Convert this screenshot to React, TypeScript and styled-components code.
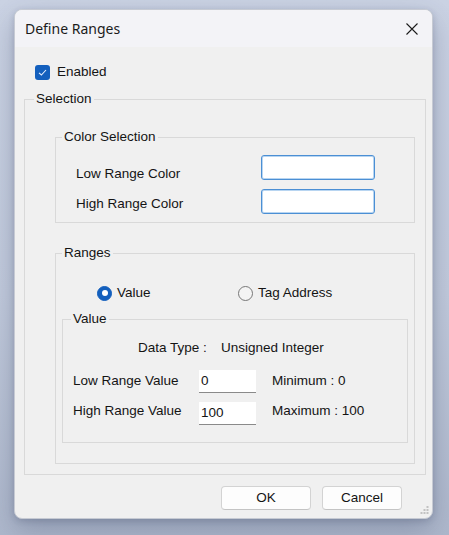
import React from "react";
import styled, { createGlobalStyle } from "styled-components";

const Global = createGlobalStyle`
  html, body { margin: 0; padding: 0; height: 100%; }
  body {
    background: linear-gradient(180deg, #cbd3e4 0%, #c2cbdd 55%, #aeb8cc 100%);
    font-family: "Liberation Sans", Arial, sans-serif;
    overflow: hidden;
  }
  #root { height: 100%; }
`;

const Page = styled.div`
  height: 100%;
  box-sizing: border-box;
  padding: 9px 0 0 14px;
`;

const Window = styled.div`
  position: relative;
  width: 419px;
  height: 510px;
  box-sizing: border-box;
  background: #f0f0f0;
  border: 1px solid #c6cad3;
  border-radius: 8px;
  box-shadow: 0 10px 28px rgba(40, 52, 84, 0.28), 0 2px 6px rgba(40, 52, 84, 0.18);
  display: flex;
  flex-direction: column;
  overflow: hidden;
  color: #141414;
  font-size: 13.5px;
`;

const TitleBar = styled.div`
  height: 37px;
  flex: none;
  display: flex;
  align-items: center;
  justify-content: space-between;
  padding: 0 14px 0 10px;
  background: #f3f3f7;
`;

const Title = styled.div`
  font-family: "Noto Sans", "Liberation Sans", sans-serif;
  font-size: 14px;
  color: #1b1b1b;
  line-height: 18px;
`;

const CloseIcon = styled.svg`
  width: 12px;
  height: 12px;
  display: block;
`;

const Body = styled.div`
  flex: 1;
  display: flex;
  flex-direction: column;
  padding: 0 6px 0 9px;
`;

const CheckRow = styled.label`
  display: flex;
  align-items: center;
  gap: 7px;
  height: 16px;
  margin: 17px 0 0 11px;
  line-height: 16px;
`;

const CheckBox = styled.span`
  width: 15px;
  height: 15px;
  border-radius: 3px;
  background: #135fbd;
  display: flex;
  align-items: center;
  justify-content: center;
`;

const Group = styled.fieldset<{ $m: string; $pb: number }>`
  margin: ${(p) => p.$m};
  padding: 0 0 ${(p) => p.$pb}px 0;
  border: 1px solid #d9d9d9;
  min-width: 0;
  display: flex;
  flex-direction: column;
`;

const Legend = styled.legend<{ $x: number }>`
  margin-left: ${(p) => p.$x}px;
  padding: 0 2px;
  line-height: 16px;
  font-size: 13.5px;
`;

const ColorGrid = styled.div`
  display: flex;
  padding: 10px 0 0 20px;
`;

const LabelCol = styled.div<{ $w: number; $top: number; $gap: number }>`
  width: ${(p) => p.$w}px;
  padding-top: ${(p) => p.$top}px;
  display: flex;
  flex-direction: column;
  gap: ${(p) => p.$gap}px;
`;

const Label = styled.div`
  line-height: 16px;
  white-space: nowrap;
`;

const InputCol = styled.div`
  display: flex;
  flex-direction: column;
  gap: 9px;
`;

const ColorBox = styled.div`
  width: 114px;
  height: 25px;
  box-sizing: border-box;
  background: #ffffff;
  border: 1px solid #4b8fd4;
  border-radius: 3px;
  box-shadow: inset 0 0 0 1px #b8d5f1;
`;

const RadioRow = styled.div`
  display: flex;
  margin: 24px 0 0 41px;
  height: 16px;
`;

const RadioItem = styled.label<{ $w?: number }>`
  display: flex;
  align-items: center;
  gap: 5px;
  width: ${(p) => (p.$w ? `${p.$w}px` : "auto")};
  line-height: 16px;
`;

const RadioDot = styled.span<{ $on?: boolean }>`
  width: 15px;
  height: 15px;
  box-sizing: border-box;
  border-radius: 50%;
  display: flex;
  align-items: center;
  justify-content: center;
  background: ${(p) => (p.$on ? "#135fbd" : "#f4f4f4")};
  border: 1px solid ${(p) => (p.$on ? "#135fbd" : "#777777")};
  &::after {
    content: "";
    display: ${(p) => (p.$on ? "block" : "none")};
    width: 6px;
    height: 6px;
    border-radius: 50%;
    background: #ffffff;
  }
`;

const DataRow = styled.div`
  display: flex;
  padding: 13px 0 0 75px;
  line-height: 16px;
`;

const DataKey = styled.span`
  width: 83px;
`;

const ValueGrid = styled.div`
  display: flex;
  padding: 14px 0 0 10px;
`;

const NumInput = styled.div`
  width: 57px;
  height: 23px;
  box-sizing: border-box;
  background: #ffffff;
  border-bottom: 1px solid #8a8a8a;
  padding: 3px 0 0 2px;
  line-height: 16px;
`;

const InfoCol = styled.div`
  display: flex;
  flex-direction: column;
  gap: 14px;
  padding: 3px 0 0 16px;
`;

const ButtonRow = styled.div`
  display: flex;
  justify-content: flex-end;
  gap: 11px;
  margin-top: 11px;
  padding-right: 24px;
`;

const Button = styled.button<{ $w: number }>`
  width: ${(p) => p.$w}px;
  height: 24px;
  box-sizing: border-box;
  background: #fdfdfd;
  border: 1px solid #d3d3d3;
  border-bottom-color: #c4c4c4;
  border-radius: 4px;
  font-family: "Liberation Sans", Arial, sans-serif;
  font-size: 13.5px;
  color: #141414;
  padding: 0;
  line-height: 16px;
`;

const Grip = styled.svg`
  position: absolute;
  right: 3px;
  bottom: 3px;
  width: 10px;
  height: 10px;
`;

export default function App() {
  return (
    <>
      <Global />
      <Page>
        <Window>
          <TitleBar>
            <Title>Define Ranges</Title>
            <CloseIcon viewBox="0 0 12 12">
              <path d="M0.5 0.5 L11.5 11.5 M11.5 0.5 L0.5 11.5" stroke="#1b1b1b" strokeWidth="1.1" fill="none" />
            </CloseIcon>
          </TitleBar>
          <Body>
            <CheckRow>
              <CheckBox>
                <svg width="11" height="11" viewBox="0 0 11 11">
                  <path d="M2 5.8 L4.4 8 L9 3" stroke="#e6efff" strokeWidth="1.1" fill="none" />
                </svg>
              </CheckBox>
              Enabled
            </CheckRow>
            <Group $m="11px 0 0 0" $pb={10}>
              <Legend $x={9}>Selection</Legend>
              <Group $m="22px 10px 0 30px" $pb={8}>
                <Legend $x={6}>Color Selection</Legend>
                <ColorGrid>
                  <LabelCol $w={185} $top={10.5} $gap={14}>
                    <Label>Low Range Color</Label>
                    <Label>High Range Color</Label>
                  </LabelCol>
                  <InputCol>
                    <ColorBox />
                    <ColorBox />
                  </InputCol>
                </ColorGrid>
              </Group>
              <Group $m="22px 10px 0 30px" $pb={20}>
                <Legend $x={6}>Ranges</Legend>
                <RadioRow>
                  <RadioItem $w={141}>
                    <RadioDot $on />
                    Value
                  </RadioItem>
                  <RadioItem>
                    <RadioDot />
                    Tag Address
                  </RadioItem>
                </RadioRow>
                <Group $m="10px 6px 0 6px" $pb={17}>
                  <Legend $x={8}>Value</Legend>
                  <DataRow>
                    <DataKey>Data Type :</DataKey>
                    <span>Unsigned Integer</span>
                  </DataRow>
                  <ValueGrid>
                    <LabelCol $w={126} $top={3} $gap={14}>
                      <Label>Low Range Value</Label>
                      <Label>High Range Value</Label>
                    </LabelCol>
                    <InputCol>
                      <NumInput>0</NumInput>
                      <NumInput>100</NumInput>
                    </InputCol>
                    <InfoCol>
                      <Label>Minimum : 0</Label>
                      <Label>Maximum : 100</Label>
                    </InfoCol>
                  </ValueGrid>
                </Group>
              </Group>
            </Group>
            <ButtonRow>
              <Button $w={90}>OK</Button>
              <Button $w={80}>Cancel</Button>
            </ButtonRow>
          </Body>
          <Grip viewBox="0 0 10 10">
            <rect x="7.5" y="1" width="2" height="2" fill="#c2c2c2" />
            <rect x="4.5" y="4" width="2" height="2" fill="#c2c2c2" />
            <rect x="7.5" y="4" width="2" height="2" fill="#c2c2c2" />
            <rect x="1.5" y="7" width="2" height="2" fill="#c2c2c2" />
            <rect x="4.5" y="7" width="2" height="2" fill="#c2c2c2" />
            <rect x="7.5" y="7" width="2" height="2" fill="#c2c2c2" />
          </Grip>
        </Window>
      </Page>
    </>
  );
}
